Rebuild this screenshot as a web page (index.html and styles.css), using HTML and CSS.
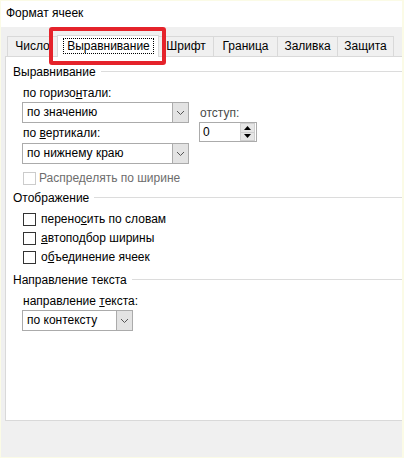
FILE: index.html
```html
<!DOCTYPE html>
<html lang="ru">
<head>
<meta charset="utf-8">
<title>Формат ячеек</title>
<link rel="stylesheet" href="styles.css">
</head>
<body>
<div class="window">
  <div class="titlebar">Формат ячеек</div>
  <div class="tabs">
    <div class="tab w-num">Число</div>
    <div class="tab active"><span class="focus">Выравнивание</span><span class="highlight"></span></div>
    <div class="tab w-font no-left">Шрифт</div>
    <div class="tab w-border">Граница</div>
    <div class="tab w-fill">Заливка</div>
    <div class="tab w-prot last">Защита</div>
  </div>
  <div class="panel">
    <div class="group-title g1"><span>Выравнивание</span></div>
    <div class="align-block">
      <div class="col-left">
        <div class="label">по горизо<u>н</u>тали:</div>
        <div class="combo combo-wide c1">
          <span class="val">по значению</span>
          <span class="drop"><svg width="9" height="6" viewBox="0 0 9 6"><polyline points="1,1 4.5,4.5 8,1" fill="none" stroke="#555" stroke-width="1"/></svg></span>
        </div>
        <div class="label l2">по <u>в</u>ертикали:</div>
        <div class="combo combo-wide c2">
          <span class="val">по нижнему краю</span>
          <span class="drop"><svg width="9" height="6" viewBox="0 0 9 6"><polyline points="1,1 4.5,4.5 8,1" fill="none" stroke="#555" stroke-width="1"/></svg></span>
        </div>
      </div>
      <div class="col-right">
        <div class="label muted">отступ:</div>
        <div class="spin">
          <span class="val">0</span>
          <span class="spin-btns">
            <span class="sbtn"><svg width="7" height="4" viewBox="0 0 7 4"><polygon points="3.5,0 7,4 0,4" fill="#000"/></svg></span>
            <span class="sbtn"><svg width="7" height="4" viewBox="0 0 7 4"><polygon points="0,0 7,0 3.5,4" fill="#000"/></svg></span>
          </span>
        </div>
      </div>
    </div>
    <div class="check disabled c-dist"><span class="box"></span><span>Распределять по ширине</span></div>

    <div class="group-title g2"><span>Отображение</span></div>
    <div class="check c-first"><span class="box"></span><span>перено<u>с</u>ить по словам</span></div>
    <div class="check c-next"><span class="box"></span><span><u>а</u>втоподбор ширины</span></div>
    <div class="check c-next"><span class="box"></span><span>о<u>б</u>ъединение ячеек</span></div>

    <div class="group-title g3"><span>Направление текста</span></div>
    <div class="label dir-label">направление <u>т</u>екста:</div>
    <div class="combo combo-narrow c3">
      <span class="val">по контексту</span>
      <span class="drop"><svg width="9" height="6" viewBox="0 0 9 6"><polyline points="1,1 4.5,4.5 8,1" fill="none" stroke="#555" stroke-width="1"/></svg></span>
    </div>
  </div>
  <div class="footer"></div>
</div>
</body>
</html>
```

FILE: styles.css
```css
html, body {
  margin: 0;
  padding: 0;
  background: #fbfbe6;
  overflow: hidden;
}

body {
  font-family: "Segoe UI", "Liberation Sans", Arial, sans-serif;
  font-size: 12px;
  color: #000;
}

u {
  text-decoration: underline;
  text-underline-offset: 1px;
}

.window {
  width: 404px;
  height: 458px;
  box-sizing: border-box;
  border: 1px solid #fbfbe6;
  border-right-width: 2px;
  background: #f0f0f0;
  display: flex;
  flex-direction: column;
  overflow: hidden;
}

.titlebar {
  flex-shrink: 0;
  height: 26px;
  line-height: 25px;
  padding-left: 5px;
  background: #fff;
}

/* Tabs */
.tabs {
  flex-shrink: 0;
  display: flex;
  align-items: flex-end;
  padding: 8px 0 0 6px;
}

.tab {
  box-sizing: border-box;
  height: 20px;
  line-height: 19px;
  text-align: center;
  border-top: 1px solid #d9d9d9;
  border-left: 1px solid #d9d9d9;
  background: #f0f0f0;
}

.tab.no-left { border-left: none; }
.tab.last { border-right: 1px solid #d9d9d9; }

.w-num { width: 50px; }
.w-font { width: 54px; }
.w-border { width: 64px; }
.w-fill { width: 60px; }
.w-prot { width: 57px; }

.tab.active {
  position: relative;
  z-index: 1;
  width: 102px;
  height: 22px;
  margin-bottom: -1px;
  background: #fff;
  border-right: 1px solid #d9d9d9;
}

.focus {
  display: block;
  margin: 2px 4px 0 5px;
  height: 16px;
  box-sizing: border-box;
  line-height: 14px;
  border: 1px dotted #000;
}

.highlight {
  position: absolute;
  left: -9px;
  top: -9px;
  width: 117px;
  height: 38px;
  box-sizing: border-box;
  border: 4px solid #e5232b;
  border-radius: 3px;
  z-index: 2;
}

/* Panel */
.panel {
  flex-shrink: 0;
  height: 365px;
  box-sizing: border-box;
  margin: 0 -6px 0 4px;
  border: 1px solid #d9d9d9;
  background: #fff;
  display: flex;
  flex-direction: column;
}

.group-title {
  display: flex;
  align-items: center;
  gap: 5px;
  height: 15px;
  line-height: 15px;
  padding-left: 7px;
}

.group-title::after {
  content: "";
  flex: 1;
  height: 1px;
  margin-bottom: 2px;
  background: #dcdcdc;
}

.g1 { margin-top: 8px; }
.g2 { margin-top: 5px; }
.g3 { margin-top: 8px; }

.label {
  height: 15px;
  line-height: 15px;
  padding-left: 1px;
}

.label.muted { color: #4a4a4a; }

.align-block {
  display: flex;
  gap: 10px;
  margin-top: 6px;
  padding-left: 16px;
}

.col-left {
  display: flex;
  flex-direction: column;
}

.col-right {
  display: flex;
  flex-direction: column;
  margin-top: 20px;
}

.combo {
  display: flex;
  box-sizing: border-box;
  height: 21px;
  border: 1px solid #ababab;
  background: #fff;
}

.combo-wide { width: 167px; }
.combo-narrow { width: 111px; margin-left: 16px; }

.c1 { margin-top: 1px; }
.l2 { margin-top: 3px; }
.c2 { margin-top: 2px; }
.c3 { margin-top: 1px; }

.combo .val {
  flex: 1;
  line-height: 19px;
  padding-left: 4px;
}

.combo .drop {
  width: 16px;
  box-sizing: border-box;
  border-left: 1px solid #ababab;
  background: #e3e3e3;
  display: flex;
  align-items: center;
  justify-content: center;
}

.spin {
  display: flex;
  box-sizing: border-box;
  width: 58px;
  height: 20px;
  margin-top: 1px;
  border: 1px solid #ababab;
  background: #fff;
}

.spin .val {
  flex: 1;
  line-height: 18px;
  padding-left: 3px;
}

.spin-btns {
  display: flex;
  flex-direction: column;
  width: 15px;
  padding: 0 1px 0 0;
}

.sbtn {
  flex: 1;
  display: flex;
  align-items: center;
  justify-content: center;
  background: #e6e6e6;
  border: 1px solid #cfcfcf;
  border-bottom: none;
}

.sbtn + .sbtn {
  border-top: 1px solid #cfcfcf;
  border-bottom: 1px solid #cfcfcf;
}

/* Checkboxes */
.check {
  display: flex;
  align-items: center;
  gap: 5px;
  height: 15px;
  line-height: 15px;
  padding-left: 17px;
}

.check .box {
  width: 13px;
  height: 13px;
  box-sizing: border-box;
  border: 1px solid #333;
  background: #fff;
}

.check.disabled { color: #6d6d6d; gap: 3px; }
.check.disabled .box { border-color: #cccccc; }

.c-dist { margin-top: 7px; }
.c-first { margin-top: 6px; }
.c-next { margin-top: 4px; }

.dir-label {
  margin-top: 6px;
  padding-left: 17px;
}

.footer {
  flex: 1;
  background: #f0f0f0;
}
```
